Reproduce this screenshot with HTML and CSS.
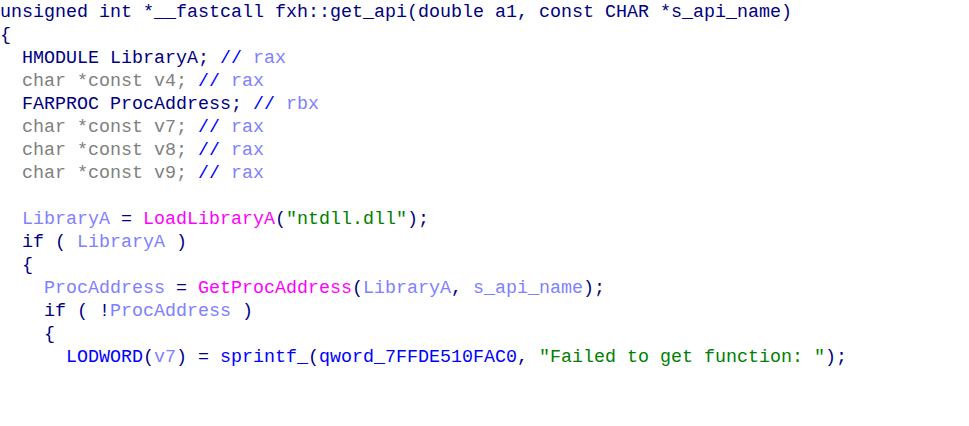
FILE: index.html
```html
<!DOCTYPE html>
<html>
<head>
<meta charset="utf-8">
<link rel="stylesheet" href="styles.css">
</head>
<body>
<div class="code">
<div class="ln">unsigned int *__fastcall fxh::get_api(double a1, const CHAR *s_api_name)</div>
<div class="ln">{</div>
<div class="ln">  HMODULE LibraryA; <span class="cm">//</span> <span class="rg">rax</span></div>
<div class="ln">  <span class="gr">char *const v4;</span> <span class="cm">//</span> <span class="rg">rax</span></div>
<div class="ln">  FARPROC ProcAddress; <span class="cm">//</span> <span class="rg">rbx</span></div>
<div class="ln">  <span class="gr">char *const v7;</span> <span class="cm">//</span> <span class="rg">rax</span></div>
<div class="ln">  <span class="gr">char *const v8;</span> <span class="cm">//</span> <span class="rg">rax</span></div>
<div class="ln">  <span class="gr">char *const v9;</span> <span class="cm">//</span> <span class="rg">rax</span></div>
<div class="ln"> </div>
<div class="ln">  <span class="var">LibraryA</span> = <span class="imp">LoadLibraryA</span>(<span class="str">"ntdll.dll"</span>);</div>
<div class="ln">  if ( <span class="var">LibraryA</span> )</div>
<div class="ln">  {</div>
<div class="ln">    <span class="var">ProcAddress</span> = <span class="imp">GetProcAddress</span>(<span class="var">LibraryA</span>, <span class="var">s_api_name</span>);</div>
<div class="ln">    if ( !<span class="var">ProcAddress</span> )</div>
<div class="ln">    {</div>
<div class="ln">      <span class="fn">LODWORD</span>(<span class="var">v7</span>) = <span class="fn">sprintf_</span>(<span class="fn">qword_7FFDE510FAC0</span>, <span class="str">"Failed to get function: "</span>);</div>
</div>
</body>
</html>
```
FILE: styles.css
```css
html, body {
  margin: 0;
  padding: 0;
  background: #ffffff;
}
.code {
  padding: 1px 0 0 0;
  font-family: "Liberation Mono", monospace;
  font-size: 18.33px;
  line-height: 23px;
  color: #000080;
}
.ln {
  white-space: pre;
  height: 23px;
}
.cm { color: #0000ff; }
.rg { color: #8080ff; }
.gr { color: #808080; }
.var { color: #8080ff; }
.imp { color: #ff00ff; }
.str { color: #008000; }
.fn { color: #0000ff; }
```
